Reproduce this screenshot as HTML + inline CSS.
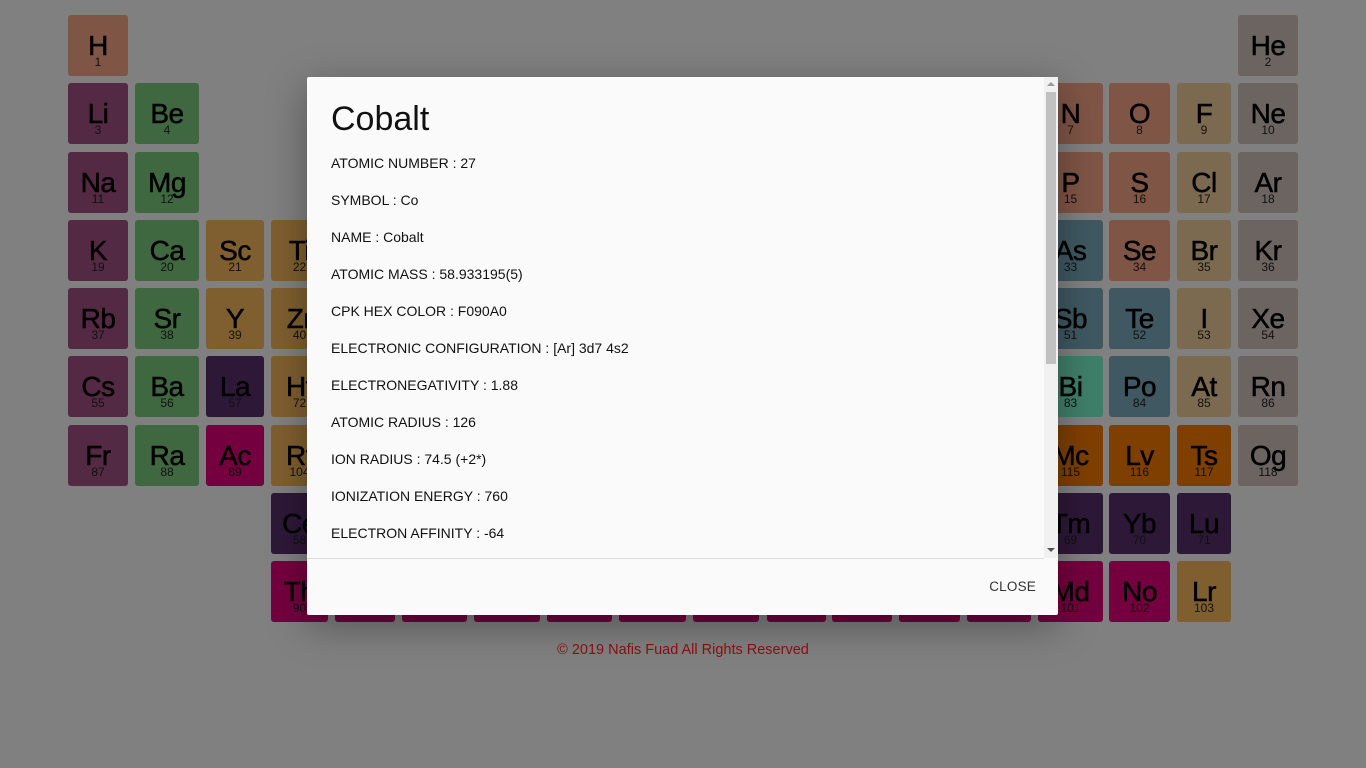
<!DOCTYPE html>
<html><head><meta charset="utf-8">
<style>
body{margin:0;width:1366px;height:768px;background:#808080;font-family:"Liberation Sans",Arial,sans-serif;overflow:hidden;position:relative}
.c{position:absolute;border-radius:3px;text-align:center;color:#000}
.c b{position:absolute;left:0;right:0;top:16px;font-size:28px;font-weight:normal;letter-spacing:-0.5px;line-height:30px;-webkit-text-stroke:0.5px #000}
.c i{position:absolute;left:0;right:0;top:40px;font-size:12px;font-style:normal;line-height:14px;color:#111}
#modal{position:absolute;left:307px;top:77px;width:751px;height:538px;background:#fafafa;border-radius:2px;box-shadow:0 10px 40px rgba(0,0,0,.35)}
#content{position:absolute;left:0;top:0;width:737px;height:481px;border-bottom:1px solid #ddd;overflow:hidden}
h1{position:absolute;left:24px;top:22px;margin:0;font-weight:normal;font-size:34px;line-height:40px;color:#111}
.l{position:absolute;left:24px;font-size:14px;color:#111;line-height:18px}
#sb{position:absolute;left:737px;top:0;width:14px;height:481px;background:#f1f1f1}
#th{position:absolute;left:2px;top:15px;width:10px;height:272px;background:#c1c1c1}
#close{position:absolute;right:22px;top:502px;font-size:13.5px;color:#333;letter-spacing:.2px}
#foot{position:absolute;left:0;width:1366px;top:642px;text-align:center;color:#8a0d0d;font-size:14.5px}
</style></head><body>
<div id="grid"></div>
<div id="modal">
<div id="content">
<h1>Cobalt</h1>
<div class="l" style="top:77px">ATOMIC NUMBER : 27</div>
<div class="l" style="top:114px">SYMBOL : Co</div>
<div class="l" style="top:151px">NAME : Cobalt</div>
<div class="l" style="top:188px">ATOMIC MASS : 58.933195(5)</div>
<div class="l" style="top:225px">CPK HEX COLOR : F090A0</div>
<div class="l" style="top:262px">ELECTRONIC CONFIGURATION : [Ar] 3d7 4s2</div>
<div class="l" style="top:299px">ELECTRONEGATIVITY : 1.88</div>
<div class="l" style="top:336px">ATOMIC RADIUS : 126</div>
<div class="l" style="top:373px">ION RADIUS : 74.5 (+2*)</div>
<div class="l" style="top:410px">IONIZATION ENERGY : 760</div>
<div class="l" style="top:447px">ELECTRON AFFINITY : -64</div>
</div>
<div id="sb"><div id="th"></div>
<div style="position:absolute;left:3px;top:5px;width:0;height:0;border-left:4px solid transparent;border-right:4px solid transparent;border-bottom:4px solid #999"></div>
<div style="position:absolute;left:3px;top:471px;width:0;height:0;border-left:4px solid transparent;border-right:4px solid transparent;border-top:4px solid #555"></div>
</div>
<div id="close">CLOSE</div>
</div>
<div id="foot">© 2019 Nafis Fuad All Rights Reserved</div>
<script>
var X=[0,68,135,206,271,335,402,474,547,619,693,767,832,899,967,1038,1109,1177,1238];
var W=[0,60,64,58,57,60,65,66,65,67,66,59,60,61,64,65,61,54,60];
var Y=[0,15,83,152,220,288,356,425,493,561];
var C={a:'#542944',e:'#3f6841',t:'#7f5f2f',n:'#7f5546',h:'#7b6a4f',g:'#6b6461',m:'#3f5861',l:'#2e1838',c:'#74003f',u:'#7f3f00',p:'#3f7f6a'};
var E=[
['H',1,1,1,'n'],['He',2,1,18,'g'],
['Li',3,2,1,'a'],['Be',4,2,2,'e'],['N',7,2,15,'n'],['O',8,2,16,'n'],['F',9,2,17,'h'],['Ne',10,2,18,'g'],
['Na',11,3,1,'a'],['Mg',12,3,2,'e'],['P',15,3,15,'n'],['S',16,3,16,'n'],['Cl',17,3,17,'h'],['Ar',18,3,18,'g'],
['K',19,4,1,'a'],['Ca',20,4,2,'e'],['Sc',21,4,3,'t'],['Ti',22,4,4,'t'],['As',33,4,15,'m'],['Se',34,4,16,'n'],['Br',35,4,17,'h'],['Kr',36,4,18,'g'],
['Rb',37,5,1,'a'],['Sr',38,5,2,'e'],['Y',39,5,3,'t'],['Zr',40,5,4,'t'],['Sb',51,5,15,'m'],['Te',52,5,16,'m'],['I',53,5,17,'h'],['Xe',54,5,18,'g'],
['Cs',55,6,1,'a'],['Ba',56,6,2,'e'],['La',57,6,3,'l'],['Hf',72,6,4,'t'],['Bi',83,6,15,'p'],['Po',84,6,16,'m'],['At',85,6,17,'h'],['Rn',86,6,18,'g'],
['Fr',87,7,1,'a'],['Ra',88,7,2,'e'],['Ac',89,7,3,'c'],['Rf',104,7,4,'t'],['Mc',115,7,15,'u'],['Lv',116,7,16,'u'],['Ts',117,7,17,'u'],['Og',118,7,18,'g']];
var L=['Ce','Pr','Nd','Pm','Sm','Eu','Gd','Tb','Dy','Ho','Er','Tm','Yb','Lu'];
var A=['Th','Pa','U','Np','Pu','Am','Cm','Bk','Cf','Es','Fm','Md','No','Lr'];
for(var i=0;i<14;i++){E.push([L[i],58+i,8,4+i,'l']);E.push([A[i],90+i,9,4+i,i==13?'t':'c']);}
var h='';
E.forEach(function(e){h+='<div class="c" style="left:'+X[e[3]]+'px;top:'+Y[e[2]]+'px;width:'+W[e[3]]+'px;height:61px;background:'+C[e[4]]+'"><b>'+e[0]+'</b><i>'+e[1]+'</i></div>';});
document.getElementById('grid').innerHTML=h;
</script>
</body></html>
